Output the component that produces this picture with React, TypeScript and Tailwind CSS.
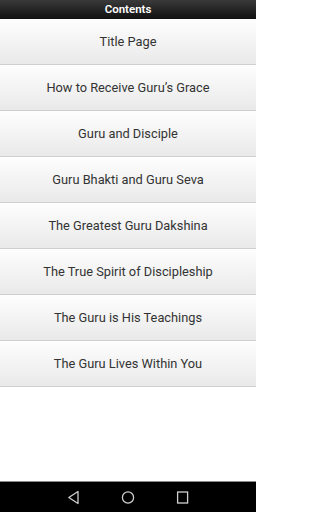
import React from "react";

const items = [
  "Title Page",
  "How to Receive Guru\u2019s Grace",
  "Guru and Disciple",
  "Guru Bhakti and Guru Seva",
  "The Greatest Guru Dakshina",
  "The True Spirit of Discipleship",
  "The Guru is His Teachings",
  "The Guru Lives Within You",
];

export default function App() {
  return (
    <div
      className="w-[256px] h-[512px] flex flex-col bg-white overflow-hidden"
      style={{ fontFamily: "Roboto, 'Liberation Sans', sans-serif" }}
    >
      <div className="h-[19px] flex items-center justify-center bg-gradient-to-b from-[#3a3a3a] to-[#111111] text-white text-[11.5px] font-semibold">
        Contents
      </div>
      <div className="flex flex-col">
        {items.map((t) => (
          <div
            key={t}
            className="h-[46px] flex items-center justify-center border-b border-[#cfcfcf] bg-gradient-to-b from-[#fefefe] to-[#e9e9e9] text-[12.8px] text-[#333333]"
          >
            {t}
          </div>
        ))}
      </div>
      <div className="flex-1" />
      <div className="h-[31px] bg-black border-t border-[#8a8a8a] flex items-center justify-center">
        <svg width="256" height="30" viewBox="0 0 256 30">
          <path d="M78 9.5 L68.8 15.5 L78 21.5 Z" fill="none" stroke="#cfcfcf" strokeWidth="1.3" strokeLinejoin="round" />
          <circle cx="128" cy="15.5" r="5.6" fill="none" stroke="#cfcfcf" strokeWidth="1.3" />
          <rect x="177.6" y="10" width="10" height="11" fill="none" stroke="#cfcfcf" strokeWidth="1.3" />
        </svg>
      </div>
    </div>
  );
}
